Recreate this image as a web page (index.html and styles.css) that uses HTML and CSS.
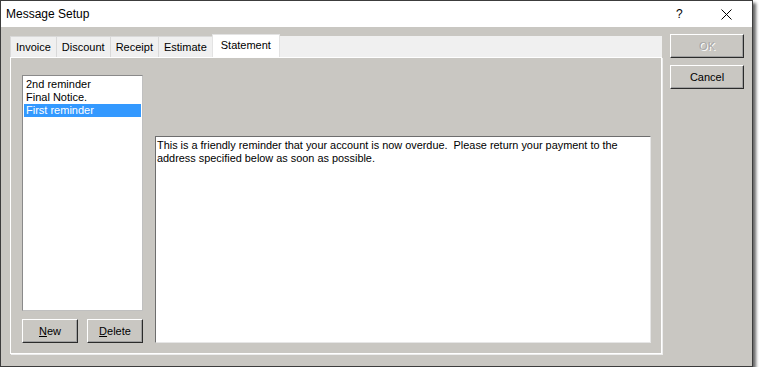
FILE: index.html
```html
<!DOCTYPE html>
<html lang="en">
<head>
    <meta charset="UTF-8">
    <title>Message Setup</title>
    <link rel="stylesheet" href="styles.css">
</head>
<body>
    <div class="window">
        <header class="titlebar">
            <span class="title">Message Setup</span>
            <span class="help">?</span>
            <span class="close">
                <svg width="11" height="11" viewBox="0 0 11 11"><path d="M0.5 0.5 L10.5 10.5 M10.5 0.5 L0.5 10.5" stroke="#000" stroke-width="1"/></svg>
            </span>
        </header>

        <div class="content">
            <section class="tabs">
                <nav class="tabbar">
                    <button class="tab">Invoice</button>
                    <button class="tab">Discount</button>
                    <button class="tab">Receipt</button>
                    <button class="tab">Estimate</button>
                    <button class="tab valgt">Statement</button>
                </nav>
                <div class="page">
                    <div class="left">
                        <ul class="listbox">
                            <li>2nd reminder</li>
                            <li>Final Notice.</li>
                            <li class="selected">First reminder</li>
                        </ul>
                        <div class="listbuttons">
                            <button class="btn"><u>N</u>ew</button>
                            <button class="btn"><u>D</u>elete</button>
                        </div>
                    </div>
                    <div class="message">This is a friendly reminder that your account is now overdue.&nbsp; Please return your payment to the address specified below as soon as possible.</div>
                </div>
            </section>

            <aside class="side">
                <button class="btn disabled">OK</button>
                <button class="btn">Cancel</button>
            </aside>
        </div>
    </div>
</body>
</html>
```

FILE: styles.css
```css
body {
    margin: 0;
    background: #fff;
    font-family: "Liberation Sans", Arial, sans-serif;
}

.window {
    width: 751px;
    height: 365px;
    border: 1px solid #3c3c3c;
    background: #c9c7c2;
    display: flex;
    flex-direction: column;
    box-shadow: 3px 3px 3px rgba(0, 0, 0, 0.6);
}

/* title bar */

.titlebar {
    height: 26px;
    background: #fff;
    display: flex;
    align-items: center;
    font-size: 12px;
    color: #000;
}

.title {
    padding-left: 5px;
    flex: 1;
}

.help {
    width: 12px;
    margin-right: 33px;
}

.close {
    width: 11px;
    height: 11px;
    margin-right: 20px;
    display: flex;
}

/* content */

.content {
    flex: 1;
    display: flex;
    gap: 8px;
    padding: 7px 8px 12px 9px;
}

.tabs {
    width: 653px;
    display: flex;
    flex-direction: column;
}

.tabbar {
    display: flex;
    align-items: flex-end;
    height: 23px;
    background: linear-gradient(#c9c7c2 2px, #f0f0f0 2px);
}

.tab {
    font-family: inherit;
    font-size: 11px;
    height: 21px;
    padding: 0 5px;
    background: #f0f0f0;
    border: 1px solid #d9d9d9;
    border-bottom: none;
    margin-right: -1px;
    color: #000;
}

.tab.valgt {
    height: 23px;
    background: #fff;
    padding: 0 8px 2px;
    border-color: #e3e3e3;
}

.page {
    flex: 1;
    border: 1px solid #fff;
    box-shadow: 1px 1px 0 #ededed;
    display: flex;
    gap: 12px;
    padding: 17px 10px 10px 11px;
}

.left {
    width: 121px;
    display: flex;
    flex-direction: column;
    gap: 8px;
}

.listbox {
    flex: 1;
    margin: 0;
    padding: 2px 1px;
    list-style: none;
    background: #fff;
    border: 1px solid #8a8a8a;
    border-right-color: #c0c0c0;
    border-bottom-color: #c0c0c0;
    font-size: 11px;
    line-height: 13px;
}

.listbox li {
    padding-left: 2px;
}

.listbox li.selected {
    background: #3399ff;
    color: #fff;
}

.listbuttons {
    display: flex;
    justify-content: space-between;
}

.btn {
    font-family: inherit;
    font-size: 11px;
    height: 24px;
    background: #c9c7c2;
    color: #000;
    border: 1px solid;
    border-color: #fff #2b2b2b #2b2b2b #fff;
    box-shadow: inset -1px -1px 0 #a0a0a0;
    padding: 0;
}

.listbuttons .btn {
    width: 56px;
}

.message {
    flex: 1;
    margin-top: 61px;
    background: #fff;
    border: 1px solid #6d6d6d;
    border-right-color: #e6e6e6;
    border-bottom-color: #e6e6e6;
    padding: 2px 1px;
    font-size: 10.9px;
    line-height: 13px;
    color: #000;
}

.side {
    width: 74px;
    display: flex;
    flex-direction: column;
    gap: 7px;
}

.side .btn.disabled {
    color: #a6a6a6;
    text-shadow: 1px 1px 0 #fff;
}
```
